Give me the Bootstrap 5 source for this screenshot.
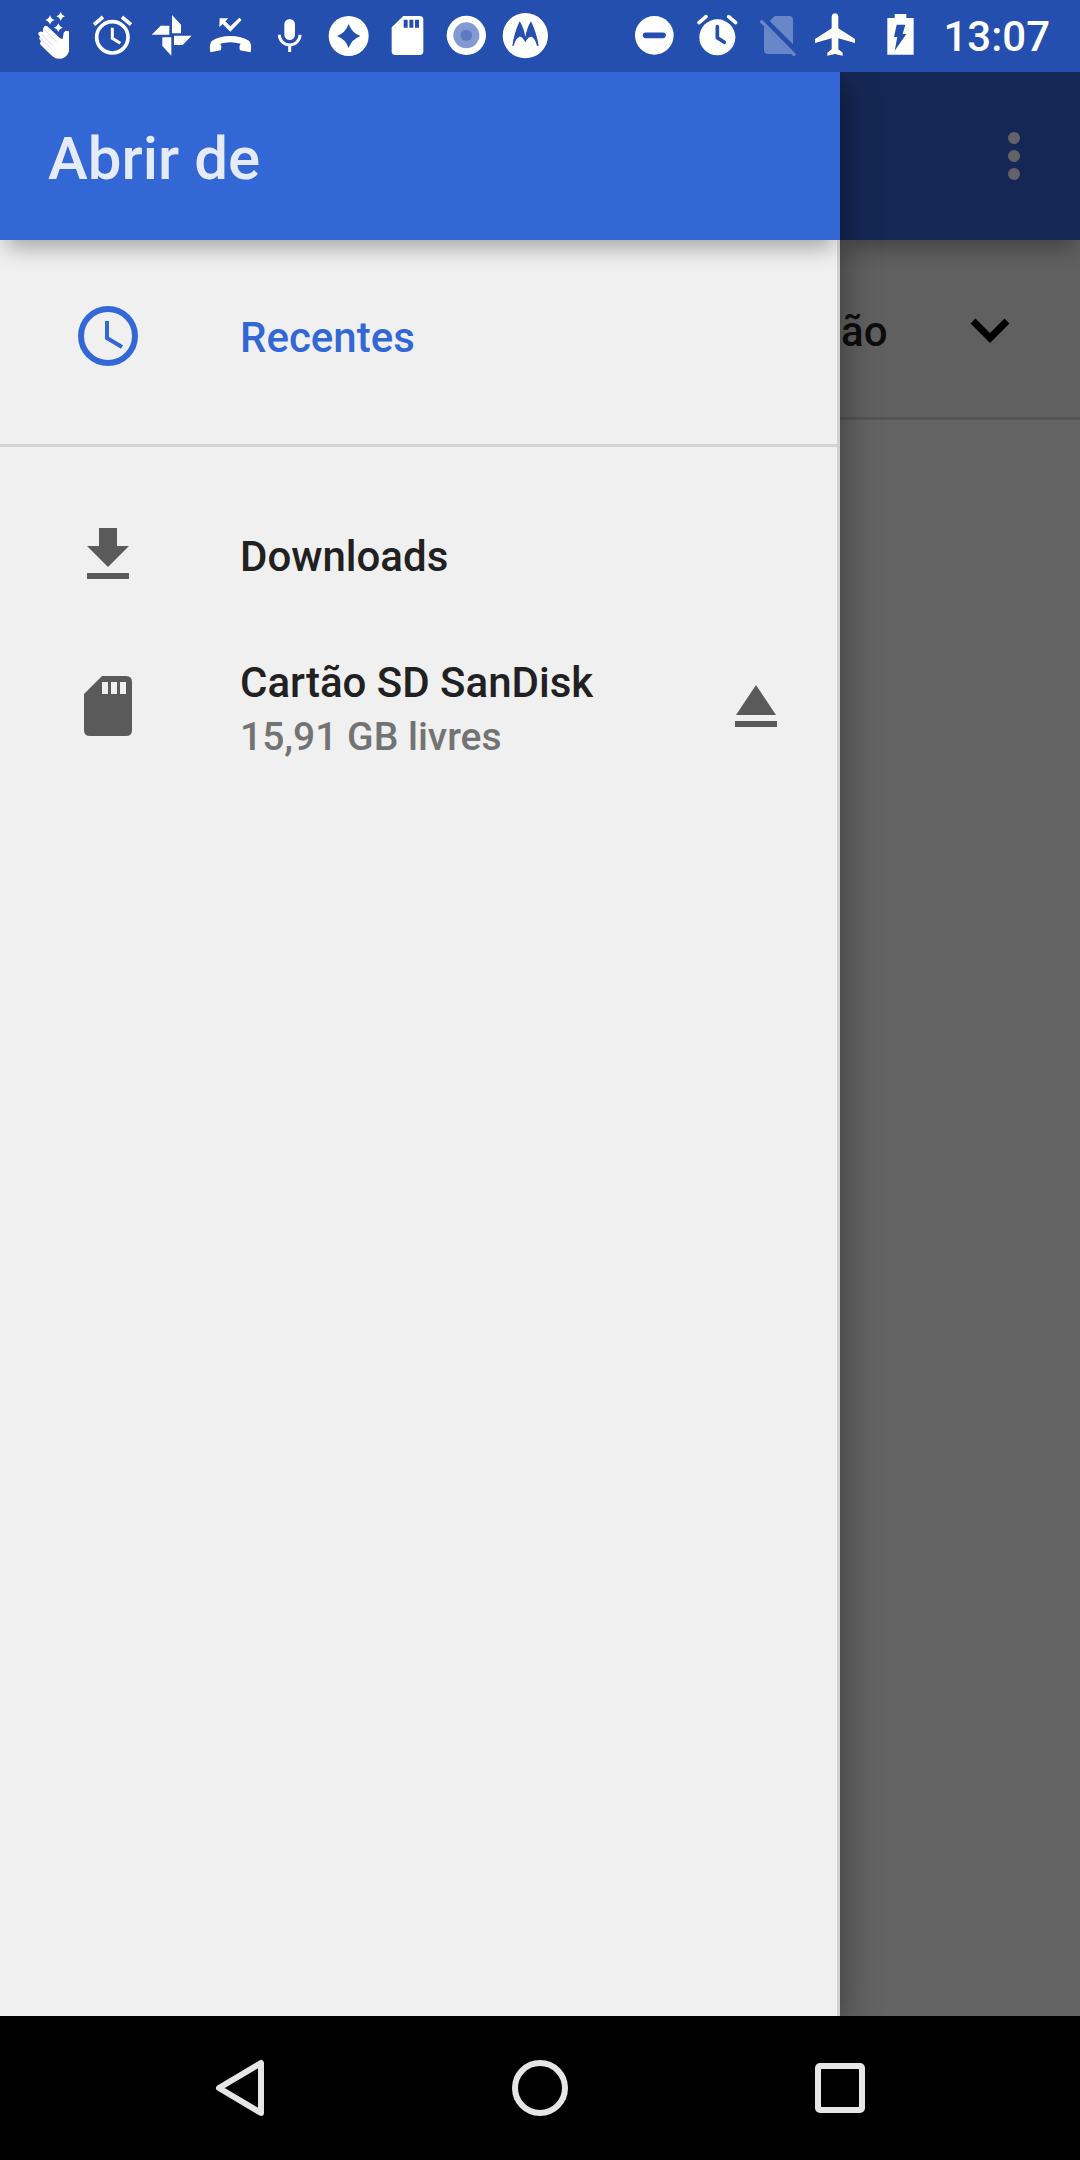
<!DOCTYPE html>
<html lang="pt-BR">
<head>
<meta charset="utf-8">
<meta name="viewport" content="width=device-width, initial-scale=1">
<title>Abrir de</title>
<link href="https://cdn.jsdelivr.net/npm/bootstrap@5.3.0/dist/css/bootstrap.min.css" rel="stylesheet">
<style>
  body { font-family: Roboto, "Noto Sans", sans-serif; font-weight: 500; font-size: 42px; line-height: 54px; color: #212121; background: #636363; }
  svg { display: block; flex: none; }
  .status-bar { height: 72px; background: #244fae; color: #fff; padding: 0 30px 0 24px; }
  .status-clock { line-height: 72px; padding: 2px 0 0 9px; }
  .app-header { height: 168px; box-shadow: 0 14px 20px -6px rgba(0, 0, 0, .3); position: relative; }
  .drawer { background: #f0f0f0; z-index: 2; box-shadow: 0 9px 36px rgba(0, 0, 0, .42); position: relative; }
  .drawer .app-header { background: #3367d6; padding: 5px 48px 0; }
  .drawer h1 { font-size: 60px; line-height: 72px; color: #e5ebfa; font-weight: 500; }
  .drawer-body { border-right: 3px solid #d0d0d0; }
  .root-group { padding: 24px 0 36px; }
  .root-group + .root-group { border-top: 3px solid #d4d4d4; padding-top: 36px; }
  .root-row { min-height: 144px; padding: 0 45px 0 72px; }
  .root-row.two-line { min-height: 158px; }
  .root-link { color: #212121; gap: 96px; }
  .root-link.active { color: #3367d6; }
  .root-text { padding-top: 4px; }
  .two-line .root-text { padding-top: 7px; }
  .root-note { font-size: 39px; color: #737373; }
  .plain-btn { background: none; border: 0; padding: 0; color: inherit; font-weight: inherit; }
  .behind { width: 240px; color: #0d0d0d; z-index: 1; }
  .behind .app-header { background: #152855; padding-right: 30px; }
  .sort-btn { height: 180px; background: #606060; border-bottom: 3px solid #545454; padding: 6px 54px 0 1px; }
  .nav-keys { height: 144px; padding: 0 90px; z-index: 3; }
</style>
</head>
<body class="d-flex flex-column min-vh-100">

<header class="status-bar d-flex align-items-center justify-content-between">
  <div class="d-flex">
    <svg width="59" height="72" viewBox="72 0 177 216" fill="#fff">
      <path d="M150 45q3 12 14 15q-11 3-14 14q-3-11-14-14q11-3 14-15zM182 36q3 10 13 13q-10 3-13 13q-3-10-13-13q10-3 13-13zM175 70q3 10 13 13q-10 3-13 13q-3-10-13-13q10-3 13-13z"/>
      <path d="M132 80q4-5 10-1l38 36l8 2l3-19q5-9 16-4v59q-3 14-17 21q-18 7-33-5l-34-33q-6-6 0-13q-8-6-3-13l-2-2q-7-7 0-12q6-4 11 1q-2-12 3-17z"/>
      <path d="M133 89l37 37M124 102l36 36M120 113l35 35" stroke="#b7c5e6" stroke-width="2" fill="none"/>
    </svg>
    <svg width="59" height="72" viewBox="249 0 177 216" fill="none" stroke="#fff">
      <circle cx="337" cy="112" r="47" stroke-width="11"/><path d="M337 83v32l24 15" stroke-width="9"/><path d="M282 74l27-23M366 51l27 23" stroke-width="11"/>
    </svg>
    <svg width="59" height="72" viewBox="426 0 177 216" fill="#fff">
      <path d="M516 45l27 29v26h-27zM575 107l-27 28h-26v-28zM514 167l-27-29v-26h27zM455 104l27-27h26v27z"/>
    </svg>
    <svg width="59" height="72" viewBox="603 0 177 216">
      <path d="M631 157q-4-23 4-34q23-15 56-15t57 15q8 11 4 34l-32-6q-4-13 2-20q-31-9-62 0q7 7 2 20z" fill="#fff"/>
      <path d="M659 55h26l-9 9l15 15l27-26l7 7l-34 35l-23-23l-10 9z" fill="#fff"/>
    </svg>
    <svg width="59" height="72" viewBox="780 0 177 216">
      <rect x="853" y="57" width="32" height="63" rx="16" fill="#fff"/><path d="M838 104a31 31 0 0 0 62 0M869 135v21" stroke="#fff" stroke-width="9" fill="none"/>
    </svg>
    <svg width="59" height="72" viewBox="117 0 177 216">
      <circle cx="206" cy="108" r="60" fill="#fff"/><path d="M206 72q10 27 35 36q-25 9-35 36q-10-27-35-36q25-9 35-36z" fill="#244fae"/>
    </svg>
    <svg width="59" height="72" viewBox="294 0 177 216">
      <path d="M370 48h49q11 0 11 11v95q0 11-11 11h-73q-11 0-11-11V82z" fill="#fff"/><path d="M371 59h12v24h-12zM388 59h12v24h-12zM405 59h12v24h-12z" fill="#244fae"/>
    </svg>
    <svg width="59" height="72" viewBox="471 0 177 216">
      <circle cx="559" cy="106" r="59" fill="#fff"/><circle cx="559" cy="106" r="39" fill="#8299d2"/><circle cx="559" cy="106" r="17" fill="#5d7bc3"/>
    </svg>
    <svg width="59" height="72" viewBox="648 0 177 216">
      <circle cx="736" cy="107" r="68" fill="#fff"/><path d="M697 138q5-39 22-74q12 19 17 46q5-27 17-46q17 35 23 74l-5-1q-6-22-16-27q-11-1-19 17q-8-18-18-17q-11 5-17 27z" fill="#244fae"/>
    </svg>
  </div>
  <div class="d-flex">
    <svg width="62" height="72" viewBox="42 0 186 216">
      <circle cx="133" cy="109" r="58" fill="#fff"/><path d="M107 109h52" stroke="#244fae" stroke-width="17" stroke-linecap="round"/>
    </svg>
    <svg width="62" height="72" viewBox="228 0 186 216" fill="none" stroke-linecap="round">
      <circle cx="322" cy="115" r="54" fill="#fff"/><path d="M267 71l21-18M356 53l21 18" stroke="#fff" stroke-width="11"/><path d="M322 83v33l21 14" stroke="#244fae" stroke-width="11" stroke-linejoin="round"/>
    </svg>
    <svg width="62" height="72" viewBox="414 0 186 216" fill="#6986c8">
      <path d="M494 51h43q12 0 12 12v73l-70-70zM462 82l83 83h-71q-12 0-12-12z"/><path d="M455 68l97 98" stroke="#6986c8" stroke-width="10" stroke-linecap="round"/>
    </svg>
    <svg width="62" height="72" viewBox="600 0 186 216" fill="#fff">
      <path d="M665 53q2-10 10-10t10 10v35l50 32v12l-50-14v33l13 10v9l-23-5l-23 5v-9l13-10v-33l-50 14v-12l50-32z"/>
    </svg>
    <svg width="62" height="72" viewBox="786 0 186 216">
      <path d="M854 45h35v12h22v110h-79V57h22z" fill="#fff"/><path d="M860 77h26l-8 28h11l-35 50l8-41h-10z" fill="#244fae"/>
    </svg>
    <span class="status-clock">13:07</span>
  </div>
</header>

<main class="d-flex flex-grow-1 overflow-hidden">
  <nav class="drawer d-flex flex-column flex-grow-1" aria-label="Locais">
    <div class="app-header d-flex align-items-center"><h1 class="m-0">Abrir de</h1></div>
    <div class="drawer-body flex-grow-1">
      <div class="root-group">
        <div class="root-row d-flex align-items-center">
          <a href="#" class="root-link active d-flex align-items-center flex-grow-1 text-decoration-none">
            <svg width="72" height="72" viewBox="0 0 72 72" fill="none" stroke="currentColor"><circle cx="36" cy="36" r="27" stroke-width="6"/><path d="M35 21v17l15 9" stroke-width="4"/></svg>
            <span class="root-text">Recentes</span>
          </a>
        </div>
      </div>
      <div class="root-group">
        <div class="root-row d-flex align-items-center">
          <a href="#" class="root-link d-flex align-items-center flex-grow-1 text-decoration-none">
            <svg width="72" height="72" viewBox="0 0 72 72" fill="#5a5a5a"><path d="M27 9h18v18h12L36 48 15 27h12zM15 54h42v6H15z"/></svg>
            <span class="root-text">Downloads</span>
          </a>
        </div>
        <div class="root-row two-line d-flex align-items-center">
          <a href="#" class="root-link d-flex align-items-center flex-grow-1 text-decoration-none">
            <svg width="72" height="72" viewBox="0 0 72 72"><path d="M30 6h24q6 0 6 6v48q0 6-6 6H18q-6 0-6-6V24z" fill="#5a5a5a"/><path d="M30 12h6v12h-6zM39 12h6v12h-6zM48 12h6v12h-6z" fill="#f0f0f0"/></svg>
            <span class="root-text d-flex flex-column"><span>Cartão SD SanDisk</span><span class="root-note">15,91 GB livres</span></span>
          </a>
          <button type="button" class="plain-btn" aria-label="Ejetar">
            <svg width="72" height="72" viewBox="0 0 72 72" fill="#5a5a5a"><path d="M36 15l20 30H16zM15 51h42v6H15z"/></svg>
          </button>
        </div>
      </div>
    </div>
  </nav>

  <section class="behind flex-shrink-0">
    <div class="app-header d-flex align-items-center justify-content-end">
      <button type="button" class="plain-btn" aria-label="Mais opções">
        <svg width="72" height="72" viewBox="0 0 72 72" fill="#626267"><circle cx="36" cy="18" r="6"/><circle cx="36" cy="36" r="6"/><circle cx="36" cy="54" r="6"/></svg>
      </button>
    </div>
    <button type="button" class="plain-btn sort-btn d-flex align-items-center justify-content-between w-100">
      <span>ão</span>
      <svg width="72" height="72" viewBox="0 0 72 72" fill="none" stroke="#000" stroke-width="7"><path d="M19 25l17 17 17-17"/></svg>
    </button>
  </section>
</main>

<footer class="nav-keys d-flex align-items-center bg-black position-relative">
  <button type="button" class="plain-btn col d-flex justify-content-center" aria-label="Voltar">
    <svg width="72" height="72" viewBox="0 0 72 72" fill="none" stroke="#e6e6e6" stroke-width="6" stroke-linejoin="round"><path d="M57 11v50L15 36z"/></svg>
  </button>
  <button type="button" class="plain-btn col d-flex justify-content-center" aria-label="Início">
    <svg width="72" height="72" viewBox="0 0 72 72" fill="none" stroke="#e6e6e6" stroke-width="6"><circle cx="36" cy="36" r="25"/></svg>
  </button>
  <button type="button" class="plain-btn col d-flex justify-content-center" aria-label="Aplicativos recentes">
    <svg width="72" height="72" viewBox="0 0 72 72" fill="none" stroke="#e6e6e6" stroke-width="6"><rect x="14" y="14" width="44" height="44" rx="2"/></svg>
  </button>
</footer>

<script src="https://cdn.jsdelivr.net/npm/bootstrap@5.3.0/dist/js/bootstrap.bundle.min.js"></script>
</body>
</html>
